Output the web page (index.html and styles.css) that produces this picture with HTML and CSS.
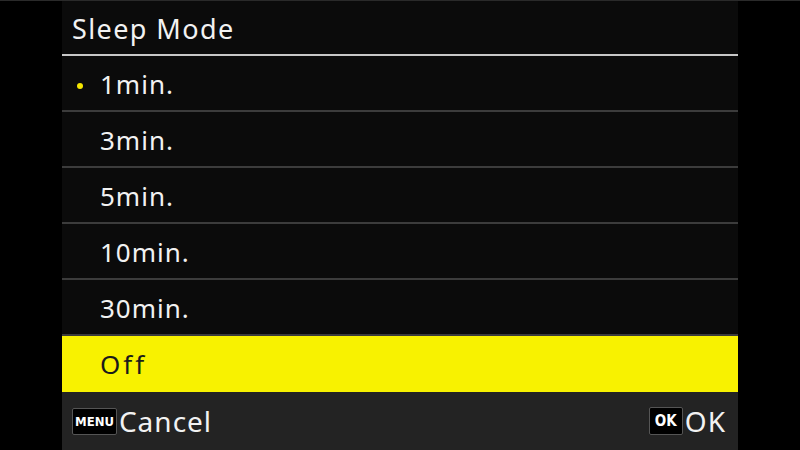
FILE: index.html
```html
<!DOCTYPE html>
<html lang="en">
  <head>
    <meta charset="UTF-8" />
    <meta name="viewport" content="width=device-width, initial-scale=1.0" />
    <title>Sleep Mode</title>
    <link rel="stylesheet" href="styles.css">
  </head>
  <body>
    <div class="screen">
      <div class="title">Sleep Mode</div>

      <ul class="options">
        <li class="option current">1min.</li>
        <li class="option">3min.</li>
        <li class="option">5min.</li>
        <li class="option">10min.</li>
        <li class="option">30min.</li>
        <li class="option selected">Off</li>
      </ul>

      <div class="footer">
        <div class="action"><span class="key">MENU</span>Cancel</div>
        <div class="action"><span class="key key-ok">OK</span>OK</div>
      </div>
    </div>
  </body>
</html>
```

FILE: styles.css
```css
/* Camera menu screen */
body {
  margin: 0;
  background-color: #000;
  font-family: "Noto Sans", "DejaVu Sans", sans-serif;
  color: #f2f2f2;
  border-top: 1px solid #2a2a2a;
}
.screen {
  width: 676px;
  height: 449px;
  margin: 0 auto;
  background-color: #0b0b0b;
  display: flex;
  flex-direction: column;
}
.title {
  height: 53px;
  padding-left: 10px;
  font-size: 27px;
  letter-spacing: 1.4px;
  line-height: 56px;
  border-bottom: 2px solid #c8c8c8;
}
.options {
  list-style: none;
  margin: 0;
  padding: 0;
}
.option {
  height: 54px;
  padding-left: 38px;
  font-size: 26px;
  letter-spacing: 1px;
  line-height: 57px;
  border-bottom: 2px solid #3c3c3c;
  position: relative;
}
.option.current::before {
  content: "";
  position: absolute;
  left: 15px;
  top: 27px;
  width: 6px;
  height: 6px;
  border-radius: 50%;
  background-color: #f5e600;
}
.option.selected {
  height: 56px;
  border-bottom: none;
  background-color: #f8f200;
  color: #1a1a1a;
  letter-spacing: 3px;
}
.footer {
  flex: 1;
  background-color: #232323;
  display: flex;
  justify-content: space-between;
  align-items: center;
  padding: 0 12px 0 10px;
  font-size: 28px;
  letter-spacing: 1px;
}
.action {
  display: flex;
  align-items: center;
}
.key {
  display: inline-block;
  background-color: #000;
  border: 1px solid #555;
  border-radius: 2px;
  color: #fff;
  font-family: "DejaVu Sans Condensed", "DejaVu Sans", sans-serif;
  font-weight: bold;
  font-size: 13px;
  letter-spacing: 0;
  line-height: 25px;
  padding: 0 2px;
  margin-right: 2px;
}
.key-ok {
  font-size: 15px;
  line-height: 26px;
  padding: 0 5px;
}
```
